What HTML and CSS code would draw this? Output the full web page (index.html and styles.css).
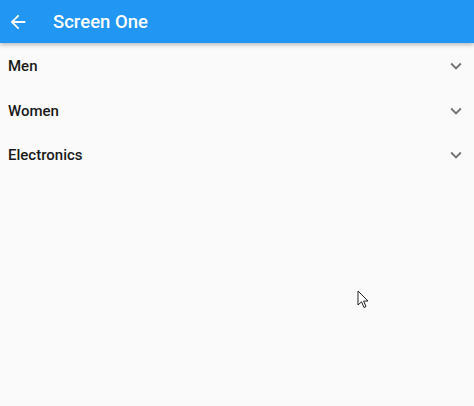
FILE: index.html
```html
<!DOCTYPE html>
<html>
<head>
<meta charset="utf-8">
<link rel="stylesheet" href="styles.css">
</head>
<body>
<header class="appbar">
  <svg class="back" width="24" height="24" viewBox="0 0 24 24"><path d="M20 11H7.83l5.59-5.59L12 4l-8 8 8 8 1.41-1.41L7.83 13H20v-2z" fill="#fff"/></svg>
  <span class="title">Screen One</span>
</header>
<main class="list">
  <div class="row"><span class="label">Men</span><svg class="chev" width="24" height="24" viewBox="0 0 24 24"><path d="M16.59 8.59L12 13.17 7.41 8.59 6 10l6 6 6-6z" fill="#757575"/></svg></div>
  <div class="row"><span class="label">Women</span><svg class="chev" width="24" height="24" viewBox="0 0 24 24"><path d="M16.59 8.59L12 13.17 7.41 8.59 6 10l6 6 6-6z" fill="#757575"/></svg></div>
  <div class="row"><span class="label">Electronics</span><svg class="chev" width="24" height="24" viewBox="0 0 24 24"><path d="M16.59 8.59L12 13.17 7.41 8.59 6 10l6 6 6-6z" fill="#757575"/></svg></div>
</main>
<svg class="cursor" width="14" height="20" viewBox="0 0 14 20"><path d="M1 1 L1 15 L4.5 11.8 L7 17.5 L9 16.6 L6.6 11 L11 11 Z" fill="#fff" stroke="#222" stroke-width="1" stroke-linejoin="round"/></svg>
</body>
</html>
```
FILE: styles.css
```css
html, body {
  margin: 0;
  padding: 0;
  background: #fafafa;
  font-family: Roboto, "Noto Sans", sans-serif;
  width: 474px;
  height: 406px;
  overflow: hidden;
}
.appbar {
  height: 43px;
  background: #2196f3;
  display: flex;
  align-items: center;
  padding-left: 7px;
  box-shadow: 0 2px 4px rgba(0,0,0,0.25);
  position: relative;
  z-index: 1;
}
.back {
  width: 22px;
  height: 22px;
}
.title {
  color: #fff;
  font-size: 18.5px;
  font-weight: 500;
  margin-left: 24px;
}
.list {
  display: flex;
  flex-direction: column;
  padding-top: 1px;
}
.row {
  height: 44.5px;
  display: flex;
  align-items: center;
  justify-content: space-between;
  padding: 0 7px 0 8px;
}
.label {
  font-size: 15px;
  font-weight: 500;
  color: #1a1a1a;
}
.chev {
  width: 22px;
  height: 22px;
}
.cursor {
  position: absolute;
  left: 357px;
  top: 290px;
}
```
